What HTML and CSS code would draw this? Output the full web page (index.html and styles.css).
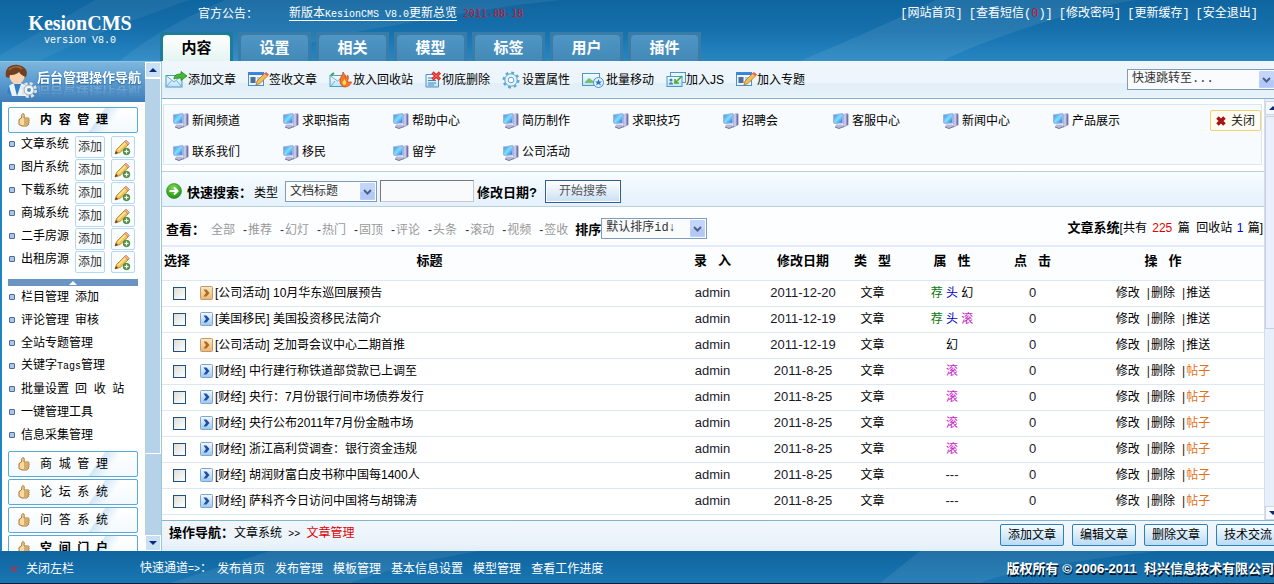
FILE: index.html
```html
<!DOCTYPE html>
<html lang="zh-CN">
<head>
<meta charset="utf-8">
<title>KesionCMS V8.0</title>
<link rel="stylesheet" href="styles.css">
</head>
<body>
<svg class="defs" aria-hidden="true">
  <defs>
    <linearGradient id="scr" x1="0" y1="0" x2="1" y2="1"><stop offset="0" stop-color="#3f8be8"/><stop offset=".5" stop-color="#7fe0ff"/><stop offset="1" stop-color="#2f6fd8"/></linearGradient>
    <linearGradient id="blueSq" x1="0" y1="0" x2="0" y2="1"><stop offset="0" stop-color="#f4faff"/><stop offset="1" stop-color="#9cc8ee"/></linearGradient>
    <linearGradient id="goldSq" x1="0" y1="0" x2="0" y2="1"><stop offset="0" stop-color="#fbe9c4"/><stop offset="1" stop-color="#e9b878"/></linearGradient>
    <linearGradient id="card" x1="0" y1="0" x2="0" y2="1"><stop offset="0" stop-color="#f6fcff"/><stop offset="1" stop-color="#bfe2f8"/></linearGradient>
    <radialGradient id="grn" cx=".45" cy=".3" r=".7"><stop offset="0" stop-color="#7fdc4e"/><stop offset="1" stop-color="#1f8f12"/></radialGradient>
  </defs>
  <symbol id="pc" viewBox="0 0 17 17">
    <path d="M10 3l5-2 1.500 1v11l-5 2.500z" fill="#8f8fc4"/><path d="M10 3l4.500-2 1 .8V13l-4 2z" fill="#c5c5e6"/><path d="M14.500 2l1.500.5v10l-1.500 1z" fill="#6d6da8"/>
    <path d="M1 2.500L10.500 1l1.500 1.500v9L2.500 12 1 10.500z" fill="#9db4e0"/><path d="M2 3.500L10 2.500v8L2.500 11z" fill="url(#scr)"/><path d="M4 12.500h6l2 2-5 2-4-1.500z" fill="#b7b7d6"/><path d="M3 15l4 1.500 5-2" fill="none" stroke="#77779f"/>
  </symbol>
  <symbol id="pencil" viewBox="0 0 17 17">
    <path d="M1 15l1.500-4.500L11 2l3.500 3.500L6 13.500z" fill="#f2c555" stroke="#b07a2a" stroke-width=".8"/><path d="M4 10.500l7.500-7.500 1 1-7.500 7.500z" fill="#ffe9a0"/><path d="M10.500 2.500L12 1l3.500 3.500L14 6z" fill="#f0b090" stroke="#b87050" stroke-width=".6"/><path d="M1 15l1-3 2 2z" fill="#5a3a1a"/>
    <circle cx="12.500" cy="12.500" r="3.300" fill="#5a9c48" stroke="#35702a" stroke-width=".7"/><path d="M10.500 12.500h4M12.500 10.500v4" stroke="#fff" stroke-width="1.200"/>
  </symbol>
  <symbol id="thumb" viewBox="0 0 12 14">
    <path d="M1 6.500L3.500 5 4 1.500C4.200.3 6.200.4 6.200 1.800L6 5h4.300c1 0 1.100 1.500.3 1.800.8.3.8 1.600 0 1.900.7.3.6 1.500-.2 1.800.5.500.2 1.500-.6 1.700L8.500 13H4L1 11.500z" fill="#fbd9a0" stroke="#a8742c"/><path d="M6 7h4.500M6 9h4.500M6 11h4" stroke="#a8742c" stroke-width=".9"/>
  </symbol>
  <symbol id="dot" viewBox="0 0 6 6"><rect x=".5" y=".5" width="5" height="5" rx=".5" fill="#a9c8f0" stroke="#4c6a96"/></symbol>
  <symbol id="go" viewBox="0 0 13 14"><rect x=".5" y=".5" width="12" height="13" rx="1" fill="url(#blueSq)" stroke="#7aa6d6"/><path d="M3.500 3.500h3l3 3.500-3 3.500h-3L6 7z" fill="#1f4fa8"/></symbol>
  <symbol id="gold" viewBox="0 0 13 14"><rect x=".5" y=".5" width="12" height="13" rx="1" fill="url(#goldSq)" stroke="#c09a6a"/><path d="M3.500 3.500h3l3 3.500-3 3.500h-3L6 7z" fill="#b06a20"/></symbol>
  <symbol id="chev" viewBox="0 0 15 17"><rect width="15" height="17" rx="1" fill="#c3d5fb"/><path d="M.5 9h14v7.500H.5z" fill="#b2c8f6"/><path d="M4 7l3.500 3.500L11 7" fill="none" stroke="#4d6185" stroke-width="2"/></symbol>
  <symbol id="mail" viewBox="0 0 23 17"><rect x="1" y="4.500" width="16" height="11.500" fill="url(#card)" stroke="#4a98c4"/><path d="M1.500 5l7.500 6 7.500-6M1.500 15.500l5-6M16.500 15.500l-5-6" fill="none" stroke="#6fb0d4"/><path d="M9 8c0-4 3-5 7-5V.5l6 4.500-6 4.500V7c-3 0-5 0-7 1z" fill="#45b83c" stroke="#21861d" stroke-width=".8"/></symbol>
  <symbol id="sign" viewBox="0 0 21 17"><rect x=".5" y="1.500" width="15" height="13" fill="#eaf5ff" stroke="#4a90cc"/><path d="M.5 1.500h15V4H.5z" fill="#3a80dd"/><rect x="2.500" y="6" width="5" height="6" fill="#4d6f95"/><path d="M9 7h5M9 9h4" stroke="#7aa6c8"/><path d="M8 14l1-4 8-8 3 2.500-8 8z" fill="#f5bc50" stroke="#b2702a" stroke-width=".8"/><path d="M16 2.500L18 1l3 2.500-1.500 1.500z" fill="#e2625c"/></symbol>
  <symbol id="burn" viewBox="0 0 24 17"><rect x="1" y="4.500" width="15" height="11" fill="url(#card)" stroke="#4aa2c4"/><path d="M1.500 5l7 5 7-5M2 15l4-5" fill="none" stroke="#6fb0d4"/><path d="M2 4l3-2" stroke="#3da33d" stroke-width="2"/><path d="M11 9c0-3 2-3 3-8 1 2 3 3 2.500 6C18 6 18 5 18.500 4c2 3 0 5 0 7l4 0c-1 4-5 5-7 5s-5-3-4.500-7z" fill="#f4772a" stroke="#cf3a16" stroke-width=".7"/><path d="M13.500 12c0-2 1.500-2 2-4 1 2 2 3 1.500 5-.5 1.500-3.500 1-3.500-1z" fill="#ffe05a"/></symbol>
  <symbol id="del" viewBox="0 0 17 17"><path d="M1 3.500h9.500l3 3V16H1z" fill="url(#card)" stroke="#4a92c8"/><path d="M3 7h6M3 9.500h8M3 12h8M3 14h6" stroke="#4a86b4"/><path d="M7.500 1.500l7.500 7M15 1.500l-7.500 7" stroke="#d9302c" stroke-width="3.200"/><path d="M8 2l6.500 6M14.500 2L8 8" stroke="#f2807a" stroke-width=".8"/></symbol>
  <symbol id="gear" viewBox="0 0 18 18"><circle cx="9" cy="9" r="7" fill="none" stroke="#5fa6d0" stroke-width="3" stroke-dasharray="2.700 2.798"/><circle cx="9" cy="9" r="6.200" fill="#e4f4ff" stroke="#5fa6d0"/><circle cx="9" cy="9" r="2.800" fill="#fff" stroke="#5fa6d0"/></symbol>
  <symbol id="move" viewBox="0 0 22 17"><rect x=".5" y="2.500" width="17" height="12" fill="url(#card)" stroke="#4a98c4"/><path d="M3 11l4-4 4 3 4-2v4H3z" fill="#79bf6d"/><circle cx="16.500" cy="11.500" r="5" fill="#e2f2ff" stroke="#4d90c8"/><path d="M16.500 8l1 2.500h2.500l-2 1.500 1 2.500-2.500-1.500-2.500 1.500 1-2.500-2-1.500H15.500z" fill="#2c78c4"/></symbol>
  <symbol id="cards" viewBox="0 0 20 17"><rect x="4.500" y="1.500" width="15" height="10" fill="#e6f5ff" stroke="#4a98c4"/><rect x="1" y="5.500" width="15" height="10" fill="url(#card)" stroke="#4a98c4"/><circle cx="5" cy="9" r="1.500" fill="#427fae"/><path d="M3 13.500c0-3 4-3 4 0z" fill="#427fae"/><path d="M9 8v4h4M9.500 11.500L16 5" fill="none" stroke="#4aa82e" stroke-width="1.600"/></symbol>
</svg>

<header class="top">
  <svg class="swoosh" viewBox="0 0 1274 61" preserveAspectRatio="none" aria-hidden="true">
    <path d="M0 55L95 0H190C130 20 70 45 40 61H0z" fill="#fff" opacity=".06"/><path d="M120 61C150 35 190 15 225 0H560C480 8 400 25 350 33L240 61z" fill="#fff" opacity=".07"/><path d="M800 61C850 40 900 18 935 0H1135C1060 14 990 38 942 61z" fill="#fff" opacity=".08"/>
  </svg>
  <div class="brand"><strong>KesionCMS</strong><span>version V8.0</span></div>
  <div class="top-main">
    <div class="notice">
      <span class="notice-label">官方公告：</span>
      <a class="notice-link" href="#">新版本<span class="en">KesionCMS V8.0</span>更新总览</a>
      <time class="notice-date">2011-08-18</time>
      <nav class="user-links">
        <a href="#">[网站首页]</a><a href="#">[查看短信(<i>0</i>)]</a><a href="#">[修改密码]</a><a href="#">[更新缓存]</a><a href="#">[安全退出]</a>
      </nav>
    </div>
    <nav class="tabs">
      <a class="tab on" href="#"><span>内容</span></a><a class="tab" href="#"><span>设置</span></a><a class="tab" href="#"><span>相关</span></a><a class="tab" href="#"><span>模型</span></a><a class="tab" href="#"><span>标签</span></a><a class="tab" href="#"><span>用户</span></a><a class="tab" href="#"><span>插件</span></a>
    </nav>
  </div>
</header>

<div class="middle">
  <aside class="side">
    <div class="side-body">
      <div class="side-title">
        <svg width="34" height="36" viewBox="0 0 34 36" aria-hidden="true"><path d="M5 22c3-4 14-4 17 0l1 10H8z" fill="#e9f3fc"/><path d="M5 22l-2 7 4 2zM10 20l3 12 4-12z" fill="#2f7fc6"/><ellipse cx="13" cy="12" rx="7.500" ry="8" fill="#fbd2ae"/><path d="M2 13C0 3 8 0 14 1s11 5 8 12c-3-1-5-2-7-5-3 3-7 3-9 3l-1 3z" fill="#70401f"/><path d="M5 6c3-4 10-4 13-1" stroke="#a56a3c" fill="none" stroke-width="1.500"/><circle cx="25" cy="26" r="6" fill="none" stroke="#dfe5ea" stroke-width="4" stroke-dasharray="2.700 2"/><circle cx="25" cy="26" r="5" fill="#f2f5f7" stroke="#99a8b4"/><circle cx="25" cy="26" r="2" fill="#5b8fc0"/></svg>
        <h2>后台管理操作导航</h2>
      </div>
      <div class="side-menu">
        <button class="group open" type="button"><svg width="12" height="14"><use href="#thumb"/></svg>内&nbsp; 容&nbsp; 管&nbsp; 理</button>
        <ul class="sys">
          <li><svg class="dot" width="6" height="6"><use href="#dot"/></svg><a href="#">文章系统</a><button class="add" type="button">添加</button><button class="pen" type="button" aria-label="编辑"><svg width="17" height="17"><use href="#pencil"/></svg></button></li>
          <li><svg class="dot" width="6" height="6"><use href="#dot"/></svg><a href="#">图片系统</a><button class="add" type="button">添加</button><button class="pen" type="button" aria-label="编辑"><svg width="17" height="17"><use href="#pencil"/></svg></button></li>
          <li><svg class="dot" width="6" height="6"><use href="#dot"/></svg><a href="#">下载系统</a><button class="add" type="button">添加</button><button class="pen" type="button" aria-label="编辑"><svg width="17" height="17"><use href="#pencil"/></svg></button></li>
          <li><svg class="dot" width="6" height="6"><use href="#dot"/></svg><a href="#">商城系统</a><button class="add" type="button">添加</button><button class="pen" type="button" aria-label="编辑"><svg width="17" height="17"><use href="#pencil"/></svg></button></li>
          <li><svg class="dot" width="6" height="6"><use href="#dot"/></svg><a href="#">二手房源</a><button class="add" type="button">添加</button><button class="pen" type="button" aria-label="编辑"><svg width="17" height="17"><use href="#pencil"/></svg></button></li>
          <li><svg class="dot" width="6" height="6"><use href="#dot"/></svg><a href="#">出租房源</a><button class="add" type="button">添加</button><button class="pen" type="button" aria-label="编辑"><svg width="17" height="17"><use href="#pencil"/></svg></button></li>
        </ul>
        <button class="fold" type="button" aria-label="收起"><svg width="8" height="4" viewBox="0 0 8 4"><path d="M0 4l4-4 4 4z" fill="#fff"/></svg></button>
        <ul class="tools">
          <li><svg class="dot" width="6" height="6"><use href="#dot"/></svg><a href="#">栏目管理</a><a href="#">添加</a></li>
          <li><svg class="dot" width="6" height="6"><use href="#dot"/></svg><a href="#">评论管理</a><a href="#">审核</a></li>
          <li><svg class="dot" width="6" height="6"><use href="#dot"/></svg><a href="#">全站专题管理</a></li>
          <li><svg class="dot" width="6" height="6"><use href="#dot"/></svg><a href="#">关键字<span class="en">Tags</span>管理</a></li>
          <li><svg class="dot" width="6" height="6"><use href="#dot"/></svg><a href="#">批量设置</a><a href="#">回&nbsp; 收&nbsp; 站</a></li>
          <li><svg class="dot" width="6" height="6"><use href="#dot"/></svg><a href="#">一键管理工具</a></li>
          <li><svg class="dot" width="6" height="6"><use href="#dot"/></svg><a href="#">信息采集管理</a></li>
        </ul>
        <div class="groups">
          <button class="group" type="button"><svg width="12" height="14"><use href="#thumb"/></svg>商&nbsp; 城&nbsp; 管&nbsp; 理</button>
          <button class="group" type="button"><svg width="12" height="14"><use href="#thumb"/></svg>论&nbsp; 坛&nbsp; 系&nbsp; 统</button>
          <button class="group" type="button"><svg width="12" height="14"><use href="#thumb"/></svg>问&nbsp; 答&nbsp; 系&nbsp; 统</button>
          <button class="group open" type="button"><svg width="12" height="14"><use href="#thumb"/></svg>空&nbsp; 间&nbsp; 门&nbsp; 户</button>
        </div>
      </div>
    </div>
    <div class="bar side-bar" aria-hidden="true"><span class="arrow"><svg width="8" height="4" viewBox="0 0 8 4"><path d="M0 4l4-4 4 4z" fill="#0a2a80"/></svg></span><span class="grip"></span><span class="rest"></span><span class="arrow"><svg width="8" height="4" viewBox="0 0 8 4"><path d="M0 0l4 4 4-4z" fill="#0a2a80"/></svg></span></div>
  </aside>

  <main class="main">
    <div class="toolbar">
      <button type="button"><svg width="23" height="17"><use href="#mail"/></svg>添加文章</button>
      <button type="button"><svg width="21" height="17"><use href="#sign"/></svg>签收文章</button>
      <button type="button"><svg width="24" height="17"><use href="#burn"/></svg>放入回收站</button>
      <button type="button"><svg width="17" height="17"><use href="#del"/></svg>彻底删除</button>
      <button type="button"><svg class="wide" width="18" height="18"><use href="#gear"/></svg>设置属性</button>
      <button type="button"><svg class="wide" width="22" height="17"><use href="#move"/></svg>批量移动</button>
      <button type="button"><svg width="20" height="17"><use href="#cards"/></svg>加入JS</button>
      <button type="button"><svg width="21" height="17"><use href="#sign"/></svg>加入专题</button>
      <span class="pick jump"><select aria-label="快速跳转"><option>快速跳转至...</option></select><svg width="15" height="17"><use href="#chev"/></svg></span>
    </div>

    <div class="view">
      <div class="view-body">
        <section class="channels">
          <nav>
            <a href="#"><svg width="17" height="17"><use href="#pc"/></svg>新闻频道</a><a href="#"><svg width="17" height="17"><use href="#pc"/></svg>求职指南</a><a href="#"><svg width="17" height="17"><use href="#pc"/></svg>帮助中心</a><a href="#"><svg width="17" height="17"><use href="#pc"/></svg>简历制作</a><a href="#"><svg width="17" height="17"><use href="#pc"/></svg>求职技巧</a><a href="#"><svg width="17" height="17"><use href="#pc"/></svg>招聘会</a><a href="#"><svg width="17" height="17"><use href="#pc"/></svg>客服中心</a><a href="#"><svg width="17" height="17"><use href="#pc"/></svg>新闻中心</a><a href="#"><svg width="17" height="17"><use href="#pc"/></svg>产品展示</a><a href="#"><svg width="17" height="17"><use href="#pc"/></svg>联系我们</a><a href="#"><svg width="17" height="17"><use href="#pc"/></svg>移民</a><a href="#"><svg width="17" height="17"><use href="#pc"/></svg>留学</a><a href="#"><svg width="17" height="17"><use href="#pc"/></svg>公司活动</a>
          </nav>
          <button class="close" type="button"><svg width="12" height="12" viewBox="0 0 12 12"><path d="M2.500 2.500l7 7M9.500 2.500l-7 7" stroke="#a81414" stroke-width="3.600"/></svg>关闭</button>
        </section>

        <form class="search">
          <svg width="16" height="16" viewBox="0 0 16 16" aria-hidden="true"><circle cx="8" cy="8" r="7.500" fill="url(#grn)" stroke="#2a8a1c" stroke-width=".6"/><path d="M3.500 8h7M8 4.500L11.500 8 8 11.500" fill="none" stroke="#fff" stroke-width="2"/></svg>
          <b>快速搜索：</b>
          <label for="kind">类型</label>
          <span class="pick kind"><select id="kind"><option>文档标题</option></select><svg width="15" height="17"><use href="#chev"/></svg></span>
          <input class="word" type="text" aria-label="关键字">
          <b>修改日期?</b>
          <button class="go" type="button">开始搜索</button>
        </form>

        <div class="filter">
          <b>查看：</b>
          <nav><a href="#">全部</a><a href="#">推荐</a><a href="#">幻灯</a><a href="#">热门</a><a href="#">固顶</a><a href="#">评论</a><a href="#">头条</a><a href="#">滚动</a><a href="#">视频</a><a href="#">签收</a></nav>
          <label class="sort-label" for="sort">排序</label>
          <span class="pick sort"><select id="sort"><option>默认排序id↓</option></select><svg width="15" height="17"><use href="#chev"/></svg></span>
          <p class="count"><b>文章系统</b>[共有 <em>225</em> 篇&nbsp; 回收站 <i>1</i> 篇]</p>
        </div>

        <table class="list">
          <colgroup><col class="c-sel"><col><col class="c-by"><col class="c-date"><col class="c-type"><col class="c-attr"><col class="c-hit"><col class="c-ops"></colgroup>
          <thead><tr><th class="sel">选择</th><th>标题</th><th>录&nbsp;&nbsp; 入</th><th>修改日期</th><th>类&nbsp;&nbsp; 型</th><th>属&nbsp;&nbsp; 性</th><th>点&nbsp;&nbsp; 击</th><th>操&nbsp;&nbsp; 作</th></tr></thead>
          <tbody>
            <tr><td><input type="checkbox" aria-label="选择"></td><td class="title"><a href="#"><svg width="13" height="14"><use href="#gold"/></svg>[公司活动] 10月华东巡回展预告</a></td><td class="num">admin</td><td class="num">2011-12-20</td><td>文章</td><td class="attr"><span class="rec">荐</span> <span class="head">头</span> <span>幻</span></td><td class="num">0</td><td class="ops"><a href="#">修改</a><a href="#">删除</a><a href="#">推送</a></td></tr>
            <tr><td><input type="checkbox" aria-label="选择"></td><td class="title"><a href="#"><svg width="13" height="14"><use href="#go"/></svg>[美国移民] 美国投资移民法简介</a></td><td class="num">admin</td><td class="num">2011-12-19</td><td>文章</td><td class="attr"><span class="rec">荐</span> <span class="head">头</span> <span class="roll">滚</span></td><td class="num">0</td><td class="ops"><a href="#">修改</a><a href="#">删除</a><a href="#">推送</a></td></tr>
            <tr><td><input type="checkbox" aria-label="选择"></td><td class="title"><a href="#"><svg width="13" height="14"><use href="#gold"/></svg>[公司活动] 芝加哥会议中心二期首推</a></td><td class="num">admin</td><td class="num">2011-12-19</td><td>文章</td><td class="attr"><span>幻</span></td><td class="num">0</td><td class="ops"><a href="#">修改</a><a href="#">删除</a><a href="#">推送</a></td></tr>
            <tr><td><input type="checkbox" aria-label="选择"></td><td class="title"><a href="#"><svg width="13" height="14"><use href="#go"/></svg>[财经] 中行建行称铁道部贷款已上调至</a></td><td class="num">admin</td><td class="num">2011-8-25</td><td>文章</td><td class="attr"><span class="roll">滚</span></td><td class="num">0</td><td class="ops"><a href="#">修改</a><a href="#">删除</a><a class="post" href="#">帖子</a></td></tr>
            <tr><td><input type="checkbox" aria-label="选择"></td><td class="title"><a href="#"><svg width="13" height="14"><use href="#go"/></svg>[财经] 央行：7月份银行间市场债券发行</a></td><td class="num">admin</td><td class="num">2011-8-25</td><td>文章</td><td class="attr"><span class="roll">滚</span></td><td class="num">0</td><td class="ops"><a href="#">修改</a><a href="#">删除</a><a class="post" href="#">帖子</a></td></tr>
            <tr><td><input type="checkbox" aria-label="选择"></td><td class="title"><a href="#"><svg width="13" height="14"><use href="#go"/></svg>[财经] 央行公布2011年7月份金融市场</a></td><td class="num">admin</td><td class="num">2011-8-25</td><td>文章</td><td class="attr"><span class="roll">滚</span></td><td class="num">0</td><td class="ops"><a href="#">修改</a><a href="#">删除</a><a class="post" href="#">帖子</a></td></tr>
            <tr><td><input type="checkbox" aria-label="选择"></td><td class="title"><a href="#"><svg width="13" height="14"><use href="#go"/></svg>[财经] 浙江高利贷调查：银行资金违规</a></td><td class="num">admin</td><td class="num">2011-8-25</td><td>文章</td><td class="attr"><span class="roll">滚</span></td><td class="num">0</td><td class="ops"><a href="#">修改</a><a href="#">删除</a><a class="post" href="#">帖子</a></td></tr>
            <tr><td><input type="checkbox" aria-label="选择"></td><td class="title"><a href="#"><svg width="13" height="14"><use href="#go"/></svg>[财经] 胡润财富白皮书称中国每1400人</a></td><td class="num">admin</td><td class="num">2011-8-25</td><td>文章</td><td class="num">---</td><td class="num">0</td><td class="ops"><a href="#">修改</a><a href="#">删除</a><a class="post" href="#">帖子</a></td></tr>
            <tr><td><input type="checkbox" aria-label="选择"></td><td class="title"><a href="#"><svg width="13" height="14"><use href="#go"/></svg>[财经] 萨科齐今日访问中国将与胡锦涛</a></td><td class="num">admin</td><td class="num">2011-8-25</td><td>文章</td><td class="num">---</td><td class="num">0</td><td class="ops"><a href="#">修改</a><a href="#">删除</a><a class="post" href="#">帖子</a></td></tr>
            <tr><td><input type="checkbox" aria-label="选择"></td><td class="title"><a href="#"><svg width="13" height="14"><use href="#go"/></svg></a></td><td></td><td></td><td></td><td></td><td></td><td></td></tr>
          </tbody>
        </table>
      </div>
      <div class="bar view-bar" aria-hidden="true"><span class="arrow"><svg width="8" height="4" viewBox="0 0 8 4"><path d="M0 4l4-4 4 4z" fill="#0a2a80"/></svg></span><span class="grip"></span><span class="rest"></span><span class="arrow"><svg width="8" height="4" viewBox="0 0 8 4"><path d="M0 0l4 4 4-4z" fill="#0a2a80"/></svg></span></div>
    </div>

    <div class="status">
      <p><b>操作导航：</b>文章系统 <span class="sep">&gt;&gt;</span> <em>文章管理</em></p>
      <div class="acts"><button type="button">添加文章</button><button type="button">编辑文章</button><button type="button">删除文章</button><button type="button">技术交流</button></div>
    </div>
  </main>
</div>

<footer class="foot">
  <svg class="swoosh" viewBox="0 0 1274 33" preserveAspectRatio="none" aria-hidden="true"><path d="M170 33L270 0H480C420 10 380 22 350 33z" fill="#fff" opacity=".08"/><path d="M880 33L920 0H1160C1090 8 1010 20 980 33z" fill="#fff" opacity=".08"/></svg>
  <button class="hide-side" type="button"><svg width="8" height="8" viewBox="0 0 8 8"><path d="M1 1l6 6M7 1L1 7" stroke="#b5304a" stroke-width="1.400"/></svg>关闭左栏</button>
  <span class="quick">快速通道<span class="en">=&gt;</span>：</span>
  <nav><a href="#">发布首页</a><a href="#">发布管理</a><a href="#">模板管理</a><a href="#">基本信息设置</a><a href="#">模型管理</a><a href="#">查看工作进度</a></nav>
  <p class="copy">版权所有 © 2006-2011&nbsp; 科兴信息技术有限公司</p>
</footer>
</body>
</html>
```
FILE: styles.css
```css
* { box-sizing: border-box; }
body {
  margin: 0;
  height: 100vh;
  display: flex;
  flex-direction: column;
  overflow: hidden;
  background: #fff;
  color: #000;
  font: 12px/16px "Liberation Sans", "Noto Sans CJK SC", sans-serif;
}
a { color: inherit; text-decoration: none; }
button, select, input { font: inherit; color: inherit; margin: 0; }
button { padding: 0; border: 0; background: none; white-space: nowrap; }
ul, p, h2 { margin: 0; padding: 0; list-style: none; }
i, em { font-style: normal; }
svg { flex: none; display: block; }
.defs { position: absolute; width: 0; height: 0; }
.en { font: 10px/16px "Liberation Mono", monospace; }
.swoosh { position: absolute; inset: 0; width: 100%; height: 100%; }

/* header */
.top {
  position: relative;
  display: flex;
  flex: none;
  background: linear-gradient(#0f659f, #1670ac 50%, #2787c3);
  color: #fff;
}
.brand {
  position: relative;
  width: 160px;
  padding-top: 12px;
  display: flex;
  flex-direction: column;
  align-items: center;
}
.brand strong { font: bold 20px/22px "Liberation Serif", serif; }
.brand span { font: 10px/14px "Liberation Mono", monospace; }
.top-main { position: relative; flex: 1; display: flex; flex-direction: column; }
.notice { display: flex; align-items: center; height: 32px; padding: 0 16px 4px 38px; white-space: nowrap; }
.notice-label { width: 91px; }
.notice-link { text-decoration: underline; text-underline-offset: 3px; }
.notice-date { margin-left: 6px; color: #d0142c; font: 10px/16px "DejaVu Sans Mono", monospace; }
.user-links { margin-left: auto; display: flex; gap: 6px; font-family: "Liberation Mono", "Noto Sans CJK SC", monospace; }
.user-links i { color: #d0142c; }
.tabs { display: flex; gap: 5px; }
.tab { width: 73px; height: 29px; padding: 3px 3px 0; background: #3a7ca8; font: bold 15px/24px "Noto Sans CJK SC", sans-serif; text-align: center; }
.tab span { display: block; height: 26px; border-radius: 4px 4px 0 0; background: linear-gradient(#5096c4, #4389b8); }
.tab.on { background: #1d7b9c; color: #000; }
.tab.on span { background: linear-gradient(#fff, #e4f5f1); }

/* frame */
.middle { flex: 1; min-height: 0; display: flex; overflow: hidden; }
.side { width: 161px; flex: none; display: flex; border-top: 1px solid #8fc4e4; }
.side-body { flex: 1; display: flex; flex-direction: column; overflow: hidden; }
.side-title { display: flex; flex: none; height: 40px; padding: 2px 0 0 4px; background: linear-gradient(#7db6dd, #5b9bd0 50%, #3f7db8); }
.side-title h2 {
  height: 26px;
  margin-left: -1px;
  color: #fff;
  font: bold 13px/26px "Noto Sans CJK SC", sans-serif;
  white-space: nowrap;
  text-shadow: 0 1px 2px #1f5f9a;
  -webkit-box-reflect: below -11px linear-gradient(transparent 30%, rgba(255, 255, 255, .35));
}
.side-menu { flex: 1; padding: 5px 7px 0 6px; border-left: 2px solid #1f84c4; }
.group {
  display: flex;
  align-items: center;
  gap: 10px;
  width: 100%;
  height: 26px;
  padding-left: 9px;
  border: 1px solid #58abd6;
  border-radius: 2px;
  background: linear-gradient(125deg, transparent 66%, #d3e6f6 67%, #fff0 78%), linear-gradient(#fff, #f2f9fd);
}
.group.open { font-weight: bold; }
.groups { display: grid; gap: 2px; margin-top: 4px; }
.sys { padding-top: 2px; }
.side li { display: flex; height: 23px; padding-left: 1px; }
.side .dot { margin: 6px 6px 0 0; }
.side li a { line-height: 18px; white-space: nowrap; }
.add, .pen { height: 22px; margin: 1px 0 0 6px; border: 1px solid #b5d9f2; border-radius: 2px; background: #fafdff; }
.add { width: 30px; color: #333; }
.pen { width: 24px; padding: 2px; }
.fold { display: flex; justify-content: center; align-items: center; width: 100%; height: 7px; margin: 6px 0 0; background: #6a94c4; }
.side .tools li { align-items: center; gap: 6px; padding-bottom: 2px; }
.side .tools .dot { margin: 0; }

/* scroll bars */
.bar { width: 16px; flex: none; display: flex; flex-direction: column; }
.bar .arrow { display: flex; align-items: center; justify-content: center; height: 16px; border: 1px solid #fff; }
.bar .rest { flex: 1; }
.side-bar { background: #b5d2e9; }
.side-bar .arrow { background: #c9e0f2; }
.side-bar .grip { height: 376px; border: 1px solid #fff; border-left: 0; }
.view-bar { background: #e7effb; padding-top: 2px; border-left: 1px solid #d4deea; }
.view-bar .arrow { height: 14px; background: #f5f9fe; border-color: #ccd6e4; }
.view-bar .grip { height: 213px; margin-top: 1px; background: #e9f0fb; border: 1px solid #c6d0de; }

/* main column runs slightly beyond the window edge */
.main { flex: 1; min-width: 0; margin-right: -6px; display: flex; flex-direction: column; border-left: 1px solid #9cc6dc; }
.toolbar { display: flex; flex: none; align-items: center; gap: 12px; height: 38px; padding-left: 3px; border-bottom: 1px solid #8ab0cf; background: linear-gradient(#eff6fc, #ecf5fb 60%, #e2eff8 61%, #e8f3fa); }
.toolbar button { display: flex; align-items: center; }
.toolbar .wide { margin-right: 2px; }
.pick { position: relative; display: block; flex: none; }
.pick select { display: block; width: 100%; height: 21px; padding: 0 4px; border: 1px solid #7f9db9; border-radius: 0; background: #fafbfd; color: #333; appearance: none; line-height: 17px; }
.pick svg { position: absolute; right: 2px; top: 2px; pointer-events: none; }
.jump { width: 149px; margin-left: auto; margin-right: 4px; }
.jump select, .sort select { font-family: "Liberation Mono", "Noto Sans CJK SC", monospace; }

.view { flex: 1; min-height: 0; display: flex; overflow: hidden; }
.view-body { flex: 1; min-width: 0; overflow: hidden; padding-top: 5px; }
.channels { display: flex; align-items: flex-start; margin: 0 2px 6px 1px; border: 1px solid #d6e8f5; background: #f8fbfe; }
.channels nav { flex: 1; display: grid; grid-template-columns: repeat(auto-fill, 110px); }
.channels nav a { display: flex; align-items: center; gap: 3px; height: 31px; padding-left: 8px; }
.channels nav a:nth-child(n+10) { height: 28px; padding-top: 4px; }
.close { display: flex; align-items: center; gap: 4px; height: 21px; margin: 5px 0 0; padding: 0 5px 0 4px; border: 1px solid #f2cf74; border-radius: 2px; background: #fffdf3; color: #222; }

.search { display: flex; align-items: center; height: 36px; padding: 4px 4px 0; border: solid #b9cfdc; border-width: 1px 0; background: linear-gradient(#f8fcff, #e4f1fb); }
.view-body b, .sort-label, .status b { font-weight: bold; font-size: 13px; white-space: nowrap; }
.search > b, .search label { padding-top: 4px; }
.search > b { margin-left: 5px; }
.search label { margin: 0 7px 0 2px; }
.kind { width: 92px; margin-right: 3px; }
.word { width: 94px; height: 22px; border: 1px solid #777; border-right-color: #c4c8cc; border-bottom-color: #c4c8cc; background: #f9fafb; }
.search .word + b { margin-left: 3px; }
.go { width: 76px; height: 23px; margin-left: 8px; border: 1px solid #2f5f96; background: linear-gradient(#fff, #c9dff5); box-shadow: inset 0 0 0 1px #fff; color: #555; }

.filter { display: flex; align-items: center; height: 38px; padding: 8px 1px 0 4px; background: #fdfeff; white-space: nowrap; }
.filter nav { display: flex; margin-left: 6px; color: #999; }
.filter nav a + a::before { content: "-"; color: #333; padding: 0 1px 0 8px; }
.sort-label { margin-left: 7px; }
.sort { width: 106px; }
.filter .pick { margin-bottom: 4px; }
.count { margin-left: auto; padding-bottom: 4px; }
.count em { color: #e00000; padding: 0 2px; }
.count i { color: #0000d0; padding: 0 1px; }

.list { width: 100%; table-layout: fixed; border-collapse: collapse; text-align: center; }
.list th { height: 34px; padding: 0 0 4px; border-top: 2px solid #e2eafc; border-bottom: 1px solid #dce9f4; background: #fbfdff; font-size: 13px; white-space: nowrap; }
.list td { height: 26px; padding: 0; border-bottom: 1px solid #dce9f4; white-space: nowrap; }
.list th.sel { text-align: left; padding-left: 2px; }
.c-sel { width: 34px; }
.c-by { width: 99px; }
.c-date { width: 82px; }
.c-type { width: 57px; }
.c-attr { width: 102px; }
.c-hit { width: 59px; }
.c-ops { width: 202px; }
.list .title { text-align: left; padding-left: 4px; }
.title a { display: flex; align-items: center; gap: 2px; }
.list .num { font-size: 13px; color: #1a1a2a; }
.list input { display: block; appearance: none; width: 13px; height: 13px; margin-left: 11px; border: 1px solid #1c5180; background: linear-gradient(135deg, #dcdcd7, #fff); }
.rec { color: #0a7a0a; }
.head { color: #0000c8; }
.roll { color: #c81ec8; }
.list .post { color: #e2701a; }
.ops a + a::before { content: "|"; color: #222; padding: 0 1px 0 7px; }

.status { display: flex; flex: none; height: 31px; padding-left: 7px; border-top: 1px solid #86b4cc; background: linear-gradient(#eff6fc, #ecf4fb 70%, #e2eef8); }
.status p { line-height: 24px; }
.status em { color: #e00000; }
.status .sep { padding: 0 3px; font-size: 10px; }
.acts { display: flex; gap: 8px; margin-left: auto; padding-top: 3px; }
.acts button { width: 64px; height: 22px; border: 1px solid #2f7fb8; border-radius: 2px; background: linear-gradient(#f6fbff, #b9dcf4); }

/* footer */
.foot { position: relative; display: flex; flex: none; align-items: center; height: 33px; padding-top: 3px; border-bottom: 1px solid #06182c; background: linear-gradient(#0f659f, #1a76b2); color: #fff; white-space: nowrap; }
.foot > :not(.swoosh) { position: relative; }
.hide-side { display: flex; align-items: center; gap: 8px; width: 130px; padding-left: 10px; }
.quick { margin-left: 10px; }
.foot nav { display: flex; gap: 10px; margin-left: 5px; }
.copy { margin-left: auto; font-weight: bold; font-size: 13px; text-shadow: 1px 2px 0 #04121f; }
```
